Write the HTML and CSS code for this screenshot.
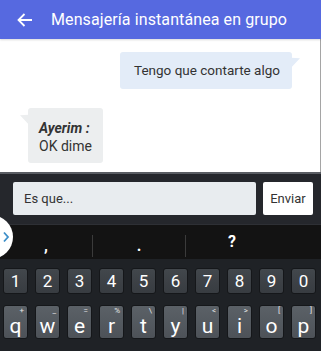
FILE: index.html
```html
<!DOCTYPE html>
<html>
<head>
<meta charset="utf-8">
<link rel="stylesheet" href="styles.css">
</head>
<body>
<div class="screen">
  <div class="header">
    <svg class="back" width="16" height="14" viewBox="0 0 16 14"><path d="M15 7H1.5M7.5 1L1.5 7l6 6" fill="none" stroke="#fff" stroke-width="1.8"/></svg>
    <span class="title">Mensajería instantánea en grupo</span>
  </div>
  <div class="chat">
    <div class="msg sent"><span>Tengo que contarte algo</span></div>
    <div class="msg recv"><span class="who">Ayerim :</span><span>OK dime</span></div>
  </div>
  <div class="composer">
    <div class="input">Es que...</div>
    <div class="send">Enviar</div>
  </div>
  <div class="suggest">
    <div class="sug comma">,</div>
    <div class="sep"></div>
    <div class="sug dot">.</div>
    <div class="sep"></div>
    <div class="sug">?</div>
    <div class="handle"><svg width="8" height="12" viewBox="0 0 8 12"><path d="M2 1.5L6 6l-4 4.5" fill="none" stroke="#3d8fc9" stroke-width="1.8"/></svg></div>
  </div>
  <div class="keyboard">
    <div class="row nums">
      <div class="key">1</div><div class="key">2</div><div class="key">3</div><div class="key">4</div><div class="key">5</div><div class="key">6</div><div class="key">7</div><div class="key">8</div><div class="key">9</div><div class="key">0</div>
    </div>
    <div class="row letters">
      <div class="key"><i>+</i><b>q</b></div><div class="key"><i>_</i><b>w</b></div><div class="key"><i>=</i><b>e</b></div><div class="key"><i>%</i><b>r</b></div><div class="key"><i>\</i><b>t</b></div><div class="key"><i>|</i><b>y</b></div><div class="key"><i>&lt;</i><b>u</b></div><div class="key"><i>&gt;</i><b>i</b></div><div class="key"><i>[</i><b>o</b></div><div class="key"><i>]</i><b>p</b></div>
    </div>
  </div>
</div>
</body>
</html>
```
FILE: styles.css
```css
* { box-sizing: border-box; }
html, body { margin: 0; padding: 0; }
body { font-family: Roboto, "Noto Sans", sans-serif; width: 321px; height: 351px; overflow: hidden; background: #202327; }
.screen { width: 321px; height: 351px; display: flex; flex-direction: column; }
.header { height: 39px; background: #5669e0; display: flex; align-items: center; color: #fff; box-shadow: 0 1px 2px rgba(0,0,0,0.15); position: relative; z-index: 1; }
.back { margin-left: 17px; margin-top: 1px; }
.title { margin-left: 18px; font-size: 16px; letter-spacing: 0.1px; }
.chat { height: 133px; background: #fff; border-right: 1px solid #a5a5a5; display: flex; flex-direction: column; }
.msg { font-size: 13.5px; color: #333; position: relative; border-radius: 3px; }
.sent { align-self: flex-end; margin-top: 13px; margin-right: 28px; height: 37px; line-height: 37px; padding: 0 12px 0 14px; background: #e3ecf8; }
.sent::after { content: ""; position: absolute; right: -8px; top: 4px; border-style: solid; border-width: 4px 0 6px 9px; border-color: transparent transparent transparent #e3ecf8; transform: skewY(-20deg); }
.recv { align-self: flex-start; margin-top: 19px; margin-left: 28px; width: 75px; padding: 11px 8px 8px 11px; background: #eceeef; display: flex; flex-direction: column; line-height: 18px; font-size: 14px; }
.recv::before { content: ""; position: absolute; left: -8px; top: 5px; border-style: solid; border-width: 4px 9px 6px 0; border-color: transparent #eceeef transparent transparent; transform: skewY(20deg); }
.who { font-weight: bold; font-style: italic; }
.composer { height: 53px; background: #25272c; border-top: 2px solid #5a5d63; display: flex; align-items: flex-start; padding: 8px 8px 0 13px; gap: 7px; border-bottom: 1px solid #2e3035; }
.input { width: 243px; height: 33px; background: #e8ecef; border-radius: 2px; font-size: 13px; color: #333; line-height: 33px; padding-left: 11px; }
.send { width: 50px; height: 33px; background: #fff; border-radius: 2px; font-size: 13px; color: #333; line-height: 33px; text-align: center; }
.suggest { height: 34px; background: #131313; display: flex; align-items: center; position: relative; }
.sug { width: 92px; text-align: center; color: #fff; font-size: 16px; font-weight: bold; line-height: 34px; height: 34px; }
.sug.comma, .sug.dot { padding-top: 4px; }
.sep { width: 1px; height: 22px; background: #3b3b3b; margin-top: 8px; }
.handle { position: absolute; left: -31px; top: -10px; width: 44px; height: 44px; border-radius: 50%; background: #fff; display: flex; align-items: center; justify-content: flex-end; padding-right: 3px; }
.keyboard { flex: 1; background: #1f2226; padding: 9px 0 0 3px; display: flex; flex-direction: column; gap: 11px; }
.row { display: flex; gap: 7px; }
.key { width: 25px; border-radius: 3px; color: #fff; text-align: center; position: relative; border: 1px solid #15171a; }
.nums .key { height: 26px; background: linear-gradient(#42474c, #383c41); font-size: 17px; line-height: 25px; }
.letters .key { height: 34px; background: linear-gradient(#5b6167, #4d5258); display: flex; flex-direction: column; }
.key i { align-self: flex-end; margin-right: 3px; font-style: normal; font-size: 8px; line-height: 9px; height: 9px; color: #e6e6e6; }
.key b { font-weight: normal; font-size: 21px; line-height: 22px; height: 22px; display: block; }
```
